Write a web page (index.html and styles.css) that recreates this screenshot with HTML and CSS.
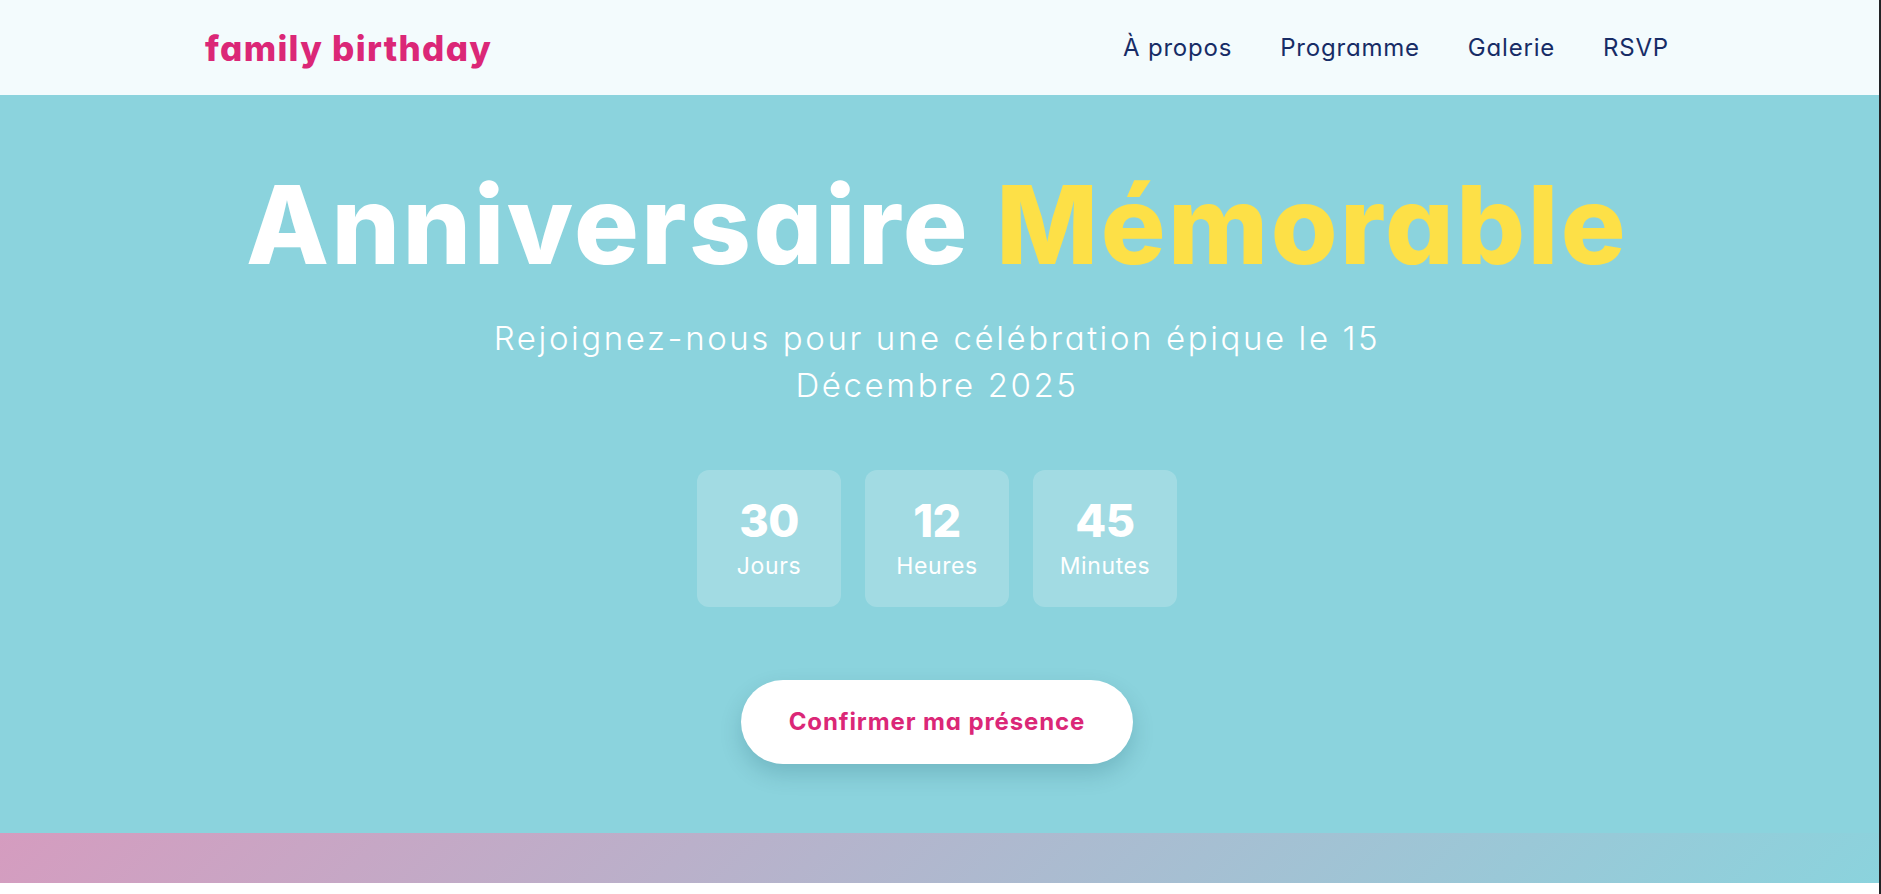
FILE: index.html
```html
<!DOCTYPE html>
<html lang="fr">
<head>
<meta charset="utf-8">
<title>family birthday</title>
<link rel="stylesheet" href="styles.css">
</head>
<body>
<div class="page">
  <header class="site-header">
    <div class="container header-inner">
      <a class="logo" href="#">family birthday</a>
      <nav class="nav">
        <a href="#">À propos</a>
        <a href="#">Programme</a>
        <a href="#">Galerie</a>
        <a href="#">RSVP</a>
      </nav>
    </div>
  </header>
  <section class="hero">
    <h1 class="hero-title">Anniversaire <span class="accent">Mémorable</span></h1>
    <p class="hero-sub">Rejoignez-nous pour une célébration épique le 15 Décembre 2025</p>
    <div class="countdown">
      <div class="count-box"><span class="count-num">30</span><span class="count-label">Jours</span></div>
      <div class="count-box"><span class="count-num">12</span><span class="count-label">Heures</span></div>
      <div class="count-box"><span class="count-num">45</span><span class="count-label">Minutes</span></div>
    </div>
    <a class="cta" href="#">Confirmer ma présence</a>
  </section>
  <div class="strip"></div>
</div>
</body>
</html>
```

FILE: styles.css
```css
* { box-sizing: border-box; }
html, body { margin: 0; padding: 0; background: #ffffff; }
body {
  font-family: "Inter", "Noto Sans", sans-serif;
  font-feature-settings: "cv11" 1;
  overflow: hidden;
}
.page {
  min-height: 100vh;
  border-right: 2px solid #222326;
}
.site-header {
  height: 95px;
  background: #f3fbfd;
  padding-right: 5px;
}
.container {
  max-width: 1464px;
  margin: 0 auto;
}
.header-inner {
  height: 100%;
  display: flex;
  align-items: center;
  justify-content: space-between;
}
.logo {
  color: #db2777;
  font-weight: 800;
  font-size: 35px;
  letter-spacing: 1.3px;
  text-decoration: none;
}
.nav {
  display: flex;
  gap: 48px;
}
.nav a {
  color: #172c66;
  text-decoration: none;
  font-size: 24px;
  letter-spacing: 0.8px;
  font-weight: 400;
}
.hero {
  background: #8bd3dd;
  display: flex;
  flex-direction: column;
  align-items: center;
  padding: 65px 5px 69px 0;
  text-align: center;
  color: #ffffff;
}
.hero-title {
  margin: 0 0 25px;
  font-size: 108px;
  line-height: 1.2;
  font-weight: 800;
  letter-spacing: 2.5px;
}
.accent { color: #fde047; }
.hero-sub {
  margin: 0 0 61px;
  max-width: 900px;
  font-size: 33px;
  line-height: 47px;
  font-weight: 300;
  letter-spacing: 2.6px;
}
.countdown {
  display: flex;
  gap: 24px;
  margin-bottom: 73px;
}
.count-box {
  width: 144px;
  height: 137px;
  padding: 24px 0 0;
  border-radius: 12px;
  background: rgba(255, 255, 255, 0.2);
  display: flex;
  flex-direction: column;
  align-items: center;
}
.count-num {
  font-size: 45px;
  line-height: 54px;
  font-weight: 800;
  letter-spacing: -0.5px;
}
.count-label {
  margin-top: 2px;
  font-size: 23px;
  line-height: 33px;
  font-weight: 400;
  letter-spacing: 0.6px;
}
.cta {
  display: inline-block;
  background: #ffffff;
  color: #db2777;
  font-weight: 700;
  font-size: 24px;
  line-height: 36px;
  letter-spacing: 0.9px;
  padding: 24px 48px;
  border-radius: 50px;
  text-decoration: none;
  box-shadow: 0 10px 22px rgba(0, 60, 80, 0.18);
}
.strip {
  height: 50px;
  background: linear-gradient(135deg, #d59cbf 0%, #8bd3dd 100%);
}
```
